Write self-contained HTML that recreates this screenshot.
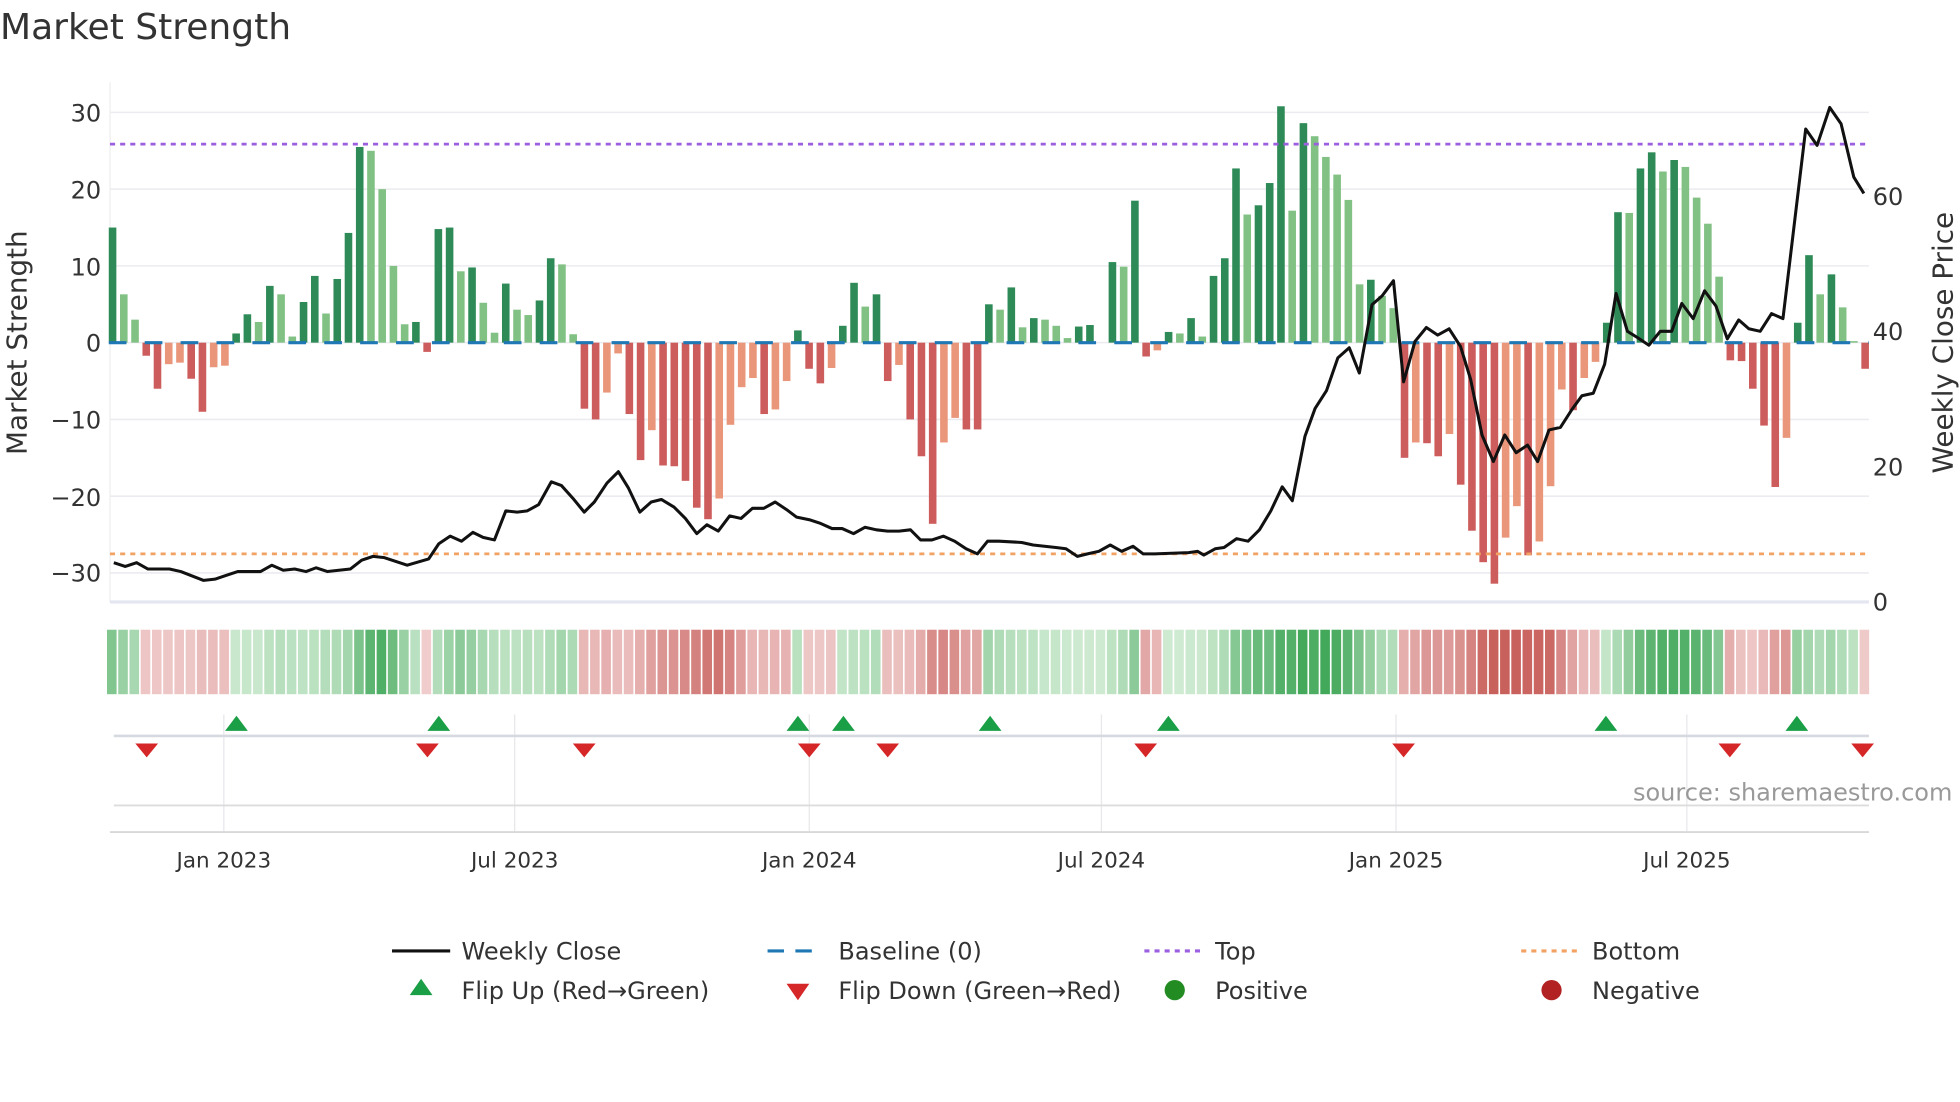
<!DOCTYPE html>
<html><head><meta charset="utf-8"><style>
html,body{margin:0;padding:0;background:#fff;width:1960px;height:1102px;overflow:hidden}
svg{display:block}
text{font-family:"DejaVu Sans","Liberation Sans",sans-serif;fill:#333}
</style></head><body>
<svg id="s" width="1960" height="1102" viewBox="0 0 1550 871.5" xmlns="http://www.w3.org/2000/svg">
<text x="0" y="31" font-size="28.5">Market Strength</text>
<g id="g"></g>
<g id="bars"></g>
<line x1="86" y1="271" x2="1478" y2="271" stroke="#1f77b4" stroke-width="2.5" stroke-dasharray="14 14.4"/>
<line x1="87" y1="114" x2="1478" y2="114" stroke="#9b5fe0" stroke-width="2.2" stroke-dasharray="4 4"/>
<line x1="87" y1="438" x2="1478" y2="438" stroke="#f2a263" stroke-width="2.2" stroke-dasharray="4 4"/>
<polyline id="price" fill="none" stroke="#111" stroke-width="2.4" stroke-linejoin="round"/>
<g font-size="19" text-anchor="end">
<text x="80" y="96">30</text><text x="80" y="157">20</text><text x="80" y="218">10</text><text x="80" y="278">0</text>
<text x="80" y="339">−10</text><text x="80" y="400">−20</text><text x="80" y="460">−30</text>
</g>
<g font-size="19">
<text x="1481" y="162">60</text><text x="1481" y="269">40</text><text x="1481" y="376">20</text><text x="1481" y="483">0</text>
</g>
<text transform="translate(21,271) rotate(-90)" font-size="22" text-anchor="middle">Market Strength</text>
<text transform="translate(1544,271) rotate(-90)" font-size="22" text-anchor="middle">Weekly Close Price</text>
<g id="strip"></g>
<g id="marks"></g>
<text x="1544" y="633" font-size="19" text-anchor="end" style="fill:#999">source: sharemaestro.com</text>
<g font-size="17" text-anchor="middle">
<text x="177" y="686">Jan 2023</text><text x="407" y="686">Jul 2023</text><text x="640" y="686">Jan 2024</text>
<text x="871" y="686">Jul 2024</text><text x="1104" y="686">Jan 2025</text><text x="1334" y="686">Jul 2025</text>
</g>
<g font-size="19">
<line x1="310" y1="752" x2="356" y2="752" stroke="#111" stroke-width="2.5"/>
<text x="365" y="759">Weekly Close</text>
<line x1="607" y1="752" x2="651" y2="752" stroke="#1f77b4" stroke-width="2.5" stroke-dasharray="13 9"/>
<text x="663" y="759">Baseline (0)</text>
<line x1="905" y1="752" x2="949" y2="752" stroke="#9b5fe0" stroke-width="2.5" stroke-dasharray="4 4"/>
<text x="961" y="759">Top</text>
<line x1="1203" y1="752" x2="1247" y2="752" stroke="#f2a263" stroke-width="2.5" stroke-dasharray="4 4"/>
<text x="1259" y="759">Bottom</text>
<polygon points="333,774 342,787 324,787" fill="#1a9e46"/>
<text x="365" y="790">Flip Up (Red→Green)</text>
<polygon points="622,778 640,778 631,791" fill="#d62728"/>
<text x="663" y="790">Flip Down (Green→Red)</text>
<circle cx="929" cy="783" r="8" fill="#228b22"/>
<text x="961" y="790">Positive</text>
<circle cx="1227" cy="783" r="8" fill="#b22222"/>
<text x="1259" y="790">Negative</text>
</g>
</svg>
<script>
var NS="http://www.w3.org/2000/svg";
function el(p,t,a){var e=document.createElementNS(NS,t);for(var k in a)e.setAttribute(k,a[k]);document.getElementById(p).appendChild(e);return e;}
var V=[15,6.3,3,-1.7,-6,-2.8,-2.6,-4.7,-9,-3.2,-3,1.2,3.7,2.7,7.4,6.3,0.8,5.3,8.7,3.8,8.3,14.3,25.5,25,20,10,2.4,2.7,-1.2,14.8,15,9.3,9.8,5.2,1.3,7.7,4.3,3.6,5.5,11,10.2,1.1,-8.6,-10,-6.5,-1.4,-9.3,-15.3,-11.4,-16,-16.1,-18,-21.5,-23,-20.3,-10.7,-5.8,-4.6,-9.3,-8.7,-5,1.6,-3.4,-5.3,-3.3,2.2,7.8,4.7,6.3,-5,-2.9,-10,-14.8,-23.6,-13,-9.8,-11.3,-11.3,
5,4.3,7.2,2,3.2,3,2.2,0.6,2.1,2.3,0,10.5,9.9,18.5,-1.8,-1,1.4,1.2,3.2,0.8,8.7,11,22.7,16.7,17.9,20.8,30.8,17.2,28.6,26.9,24.2,21.9,18.6,7.6,8.2,6.1,4.5,-15,-13,-13.1,-14.8,-11.9,-18.5,-24.5,-28.6,-31.4,-25.4,-21.3,-27.7,-25.9,-18.7,-6.1,-8.8,-4.6,-2.5,2.6,17,16.9,22.7,24.8,22.3,23.8,22.9,18.9,15.5,8.6,-2.3,-2.4,-6,-10.8,-18.8,-12.4,2.6,11.4,6.3,8.9,4.6,0.2,-3.4];
var N=V.length, X0=89, DX=(1475-89)/(N-1), Z=271, U=6.07;
[30,20,10,0,-10,-20,-30].forEach(function(v){el("g","line",{x1:87,x2:1478,y1:Z-v*U,y2:Z-v*U,stroke:"#ececf0","stroke-width":1.2});});
el("g","line",{x1:87,x2:87,y1:65,y2:476,stroke:"#eeeeee","stroke-width":1});
el("g","line",{x1:87,x2:1478,y1:476,y2:476,stroke:"#e3e6f0","stroke-width":2.5});
[177,407,640,871,1104,1334].forEach(function(x){el("g","line",{x1:x,x2:x,y1:565,y2:658,stroke:"#e8e8ec","stroke-width":1});});
el("g","line",{x1:90,x2:1478,y1:582,y2:582,stroke:"#d6d9e0","stroke-width":2});
el("g","line",{x1:90,x2:1478,y1:637,y2:637,stroke:"#dcdcdc","stroke-width":1.5});
el("g","line",{x1:87,x2:1478,y1:658,y2:658,stroke:"#d8d8d8","stroke-width":1.5});
for(var i=0;i<N;i++){var v=V[i];if(v===0)continue;var p=i?V[i-1]:0;var dark=Math.abs(v)>=Math.abs(p)||(v*p<0);
var c=v>0?(dark?"#2e8b57":"#81c184"):(dark?"#cd5c5c":"#e9967a");var x=X0+i*DX-3;var h=Math.abs(v)*U;
el("bars","rect",{x:x,y:v>0?Z-h:Z,width:6,height:h,fill:c});}
function mix(a,b,t){return "rgb("+a.map(function(c,k){return Math.round(c+(b[k]-c)*t)}).join(",")+")";}
for(var i=0;i<N;i++){var v=V[i];var s=v>=0?1:-1;var a=0,n=0;for(var j=Math.max(0,i-2);j<=i;j++){a+=Math.abs(V[j]);n++;}a/=n;var t=Math.min(1,a/26);
var c=s>0?mix([214,238,216],[66,168,90],t):mix([243,214,214],[200,96,92],t);
el("strip","rect",{x:X0+i*DX-4.4,y:498,width:DX-1.3,height:51,fill:c});}
[187,347,631,667,783,924,1270,1421].forEach(function(x){el("marks","polygon",{points:(x)+",566 "+(x+9)+",578 "+(x-9)+",578",fill:"#1a9e46"});});
[116,338,462,640,702,906,1110,1368,1473].forEach(function(x){el("marks","polygon",{points:(x-9)+",588 "+(x+9)+",588 "+x+",599",fill:"#d62728"});});
var P=[[90,445],[99,448],[108,445],[117,450],[134,450],[143,452],[161,459],[170,458],[179,455],[188,452],[206,452],[215,447],[224,451],[233,450],[242,452],[250,449],[259,452],[277,450],[286,443],[295,440],[304,441],[313,444],[322,447],[339,442],[347,430],[356,424],[365,428],[374,421],[382,425],[391,427],[400,404],[409,405],[417,404],[426,399],[436,381],[444,384],[453,394],[462,405],[470,397],[480,382],[489,373],[497,386],[506,405],[515,397],[523,395],[533,401],[542,410],[551,422],[559,415],[568,420],[577,408],[586,410],[595,402],[604,402],[613,397],[622,403],[630,409],[640,411],[649,414],[658,418],[666,418],[675,422],[684,417],[693,419],[702,420],[711,420],[720,419],[728,427],[737,427],[746,424],[755,428],[764,434],[773,438],[781,428],[790,428],[808,429],[817,431],[835,433],[843,434],[852,440],[860,438],[869,436],[878,431],[887,436],[896,432],[904,438],[913,438],[940,437],[947,436],[952,439],[961,434],[968,433],[978,426],[987,428],[996,419],[1005,404],[1014,385],[1022,396],[1032,345],[1040,323],[1049,309],[1058,283],[1067,275],[1075,295],[1085,241],[1093,234],[1102,222],[1110,302],[1119,270],[1128,259],[1137,265],[1146,260],[1155,274],[1163,300],[1172,344],[1181,365],[1190,344],[1199,358],[1208,352],[1216,365],[1225,340],[1234,338],[1243,324],[1251,313],[1260,311],[1269,288],[1278,232],[1287,262],[1295,267],[1304,273],[1313,262],[1322,262],[1330,240],[1339,252],[1348,230],[1357,242],[1366,268],[1375,253],[1383,260],[1392,262],[1401,248],[1410,252],[1428,102],[1437,115],[1447,85],[1456,98],[1466,140],[1474,153]];
document.getElementById("price").setAttribute("points",P.map(function(p){return p.join(",")}).join(" "));
</script>
</body></html>
